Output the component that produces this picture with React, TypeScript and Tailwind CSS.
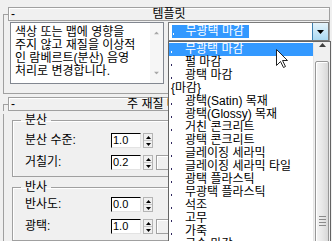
import React from "react";

/* ---- small drawn bits ---- */

function Tri({ up, className }: { up?: boolean; className?: string }) {
  return (
    <svg width="7" height="4" viewBox="0 0 7 4" className={className}>
      <polygon points={up ? "0,4 7,4 3.5,0" : "0,0 7,0 3.5,4"} fill="currentColor" />
    </svg>
  );
}

function SmallTri({ up }: { up?: boolean }) {
  return (
    <svg width="5" height="3" viewBox="0 0 5 3">
      <polygon points={up ? "0,3 5,3 2.5,0" : "0,0 5,0 2.5,3"} fill="#000" />
    </svg>
  );
}

function Cursor() {
  return (
    <svg width="13" height="20" viewBox="0 0 13 20" className="absolute left-[276px] top-[49px]">
      <path
        d="M0.5 0.5 L0.5 16.5 L4.5 12.5 L7.5 18.5 L9.5 17.5 L6.5 11.5 L11.5 11.5 Z"
        fill="#fff"
        stroke="#222"
        strokeWidth="1"
        strokeLinejoin="round"
      />
    </svg>
  );
}

/* ---- rollout pieces ---- */

function RolloutHeader({ title }: { title: string }) {
  return (
    <div className="flex h-[14px]">
      <div className="mt-[7px] w-[5px] border-l border-t border-[#a0a0a0]" />
      <div className="grid flex-1 grid-cols-[20px_1fr_20px] items-center border border-[#a0a0a0] bg-[#f0f0f0] leading-[12px] shadow-[inset_1px_1px_0_#fff]">
        <span className="pl-[2px]">-</span>
        <span className="text-center whitespace-nowrap">{title}</span>
        <span />
      </div>
    </div>
  );
}

function Spinner() {
  return (
    <div className="ml-[2px] flex h-[15px] w-[10px] flex-col border border-[#b4b4b4] bg-[#f0f0f0]">
      <div className="flex flex-1 items-center justify-center border-b border-[#c8c8c8]">
        <SmallTri up />
      </div>
      <div className="flex flex-1 items-center justify-center">
        <SmallTri />
      </div>
    </div>
  );
}

function SpinRow({ label, value, map }: { label: string; value: string; map?: boolean }) {
  return (
    <div className="flex h-[15px] items-center">
      <span className="w-[98px] pl-[12px] leading-[13px] whitespace-nowrap">{label}</span>
      <div className="flex h-[15px] w-[30px] items-center border border-b-[#e3e3e3] border-l-black border-r-[#e3e3e3] border-t-black bg-white pl-[1px] text-[11px] leading-[13px]">
        {value}
      </div>
      <Spinner />
      {map && <div className="ml-[3px] h-[15px] w-[20px] border border-[#a0a0a0] bg-[#f0f0f0] shadow-[inset_1px_1px_0_#fff]" />}
    </div>
  );
}

/* ---- dropdown list ---- */

const ITEMS: { text: string; dot: boolean }[] = [
  { text: "무광택 마감", dot: true },
  { text: "펄 마감", dot: true },
  { text: "광택 마감", dot: true },
  { text: "{마감}", dot: false },
  { text: "광택(Satin) 목재", dot: true },
  { text: "광택(Glossy) 목재", dot: true },
  { text: "거친 콘크리트", dot: true },
  { text: "광택 콘크리트", dot: true },
  { text: "글레이징 세라믹", dot: true },
  { text: "글레이징 세라믹 타일", dot: true },
  { text: "광택 플라스틱", dot: true },
  { text: "무광택 플라스틱", dot: true },
  { text: "석조", dot: true },
  { text: "고무", dot: true },
  { text: "가죽", dot: true },
  { text: "금속 마감", dot: true },
];

function DropList() {
  return (
    <div className="absolute left-[168px] top-[41px] flex h-[230px] w-[163px] border border-[#646464] bg-white">
      <div className="w-[144px] pt-[1px]">
        {ITEMS.map((it, i) => {
          const sel = i === 0;
          return (
            <div
              key={it.text}
              className={
                "flex h-[13px] items-center leading-[13px] whitespace-nowrap " +
                (sel ? "bg-[#3399ff] text-white" : "text-black")
              }
            >
              {it.dot ? (
                <span className="flex h-full w-[16px] items-end pb-[3px] pl-[2px]">
                  <span className={"h-[2px] w-[1px] " + (sel ? "bg-white" : "bg-[#302860]")} />
                </span>
              ) : (
                <span className="w-[2px]" />
              )}
              {it.text}
            </div>
          );
        })}
      </div>
      {/* scrollbar */}
      <div className="flex w-[17px] flex-col border-l border-[#e6e6e6] bg-[#f0f0f0]">
        <div className="flex h-[17px] items-center justify-center text-[#404040]">
          <Tri up />
        </div>
        <div className="mx-[1px] mt-[14px] flex h-[320px] flex-col items-center rounded-[2px] border border-[#979797] bg-gradient-to-r from-[#f4f4f4] via-[#e8e8e8] to-[#d8d8d8] pt-[154px] shadow-[inset_1px_1px_0_#fff]">
          <div className="flex w-[7px] flex-col gap-[2px]">
            <span className="h-[1px] bg-[#8a8a8a]" />
            <span className="h-[1px] bg-[#8a8a8a]" />
            <span className="h-[1px] bg-[#8a8a8a]" />
            <span className="h-[1px] bg-[#8a8a8a]" />
          </div>
        </div>
      </div>
    </div>
  );
}

export default function App() {
  return (
    <div className="relative h-[241px] w-[332px] overflow-hidden bg-[#f0f0f0] font-['Liberation_Sans','Noto_Sans_CJK_KR',sans-serif] text-[12px] text-black">
      <div className="ml-[3px] w-[327px] pt-[7px]">
        {/* 템플릿 rollout */}
        <RolloutHeader title="템플릿" />
        <div className="flex h-[73px] items-start border-b border-l border-r border-[#a0a0a0] pl-[6px]">
          <div className="mt-[1px] flex h-[62px] w-[154px] border border-[#828790] bg-white">
            <div className="flex-1 pl-[4px] pt-[3px] leading-[13px] whitespace-nowrap">
              <div>색상 또는 맵에 영향을</div>
              <div>주지 않고 재질을 이상적</div>
              <div>인 람베르트(분산) 음영</div>
              <div>처리로 변경합니다.</div>
            </div>
            <div className="flex w-[13px] flex-col items-center justify-between bg-[#f6f6f6] py-[8px] text-[#a8a8a8]">
              <Tri up className="scale-75" />
              <Tri className="scale-75" />
            </div>
          </div>
          <div className="ml-[4px] mt-[1px] flex h-[19px] w-[162px] border border-[#7a7a7a] bg-white">
            <div className="flex-1 pl-[3px] pt-[2px]">
              <div className="flex h-[13px] w-[77px] items-center bg-[#3399ff] leading-[13px] text-white whitespace-nowrap">
                <span className="flex h-full w-[14px] items-end pb-[3px] pl-[1px]">
                  <span className="h-[2px] w-[1px] bg-white" />
                </span>
                무광택 마감
              </div>
            </div>
            <div className="flex w-[16px] items-center justify-center border-l border-[#3c7fb1] bg-gradient-to-b from-[#e5f4fc] to-[#aad9f2] text-black">
              <Tri />
            </div>
          </div>
        </div>

        {/* 주 재질 rollout */}
        <div className="mt-[3px]">
          <RolloutHeader title="주 재질 매개변수" />
        </div>
        <div className="h-[140px] border-l border-[#a0a0a0] pl-[8px] pr-[4px]">
          <fieldset className="mt-[3px] border border-[#a0a0a0] pb-[6px] shadow-[inset_1px_1px_0_#fff]">
            <legend className="ml-[8px] px-[4px] leading-[13px]">분산</legend>
            <div className="mt-[6px] flex flex-col gap-[7px]">
              <SpinRow label="분산 수준:" value="1.0" />
              <SpinRow label="거칠기:" value="0.2" map />
            </div>
          </fieldset>
          <fieldset className="mt-[4px] border border-[#a0a0a0] pb-[6px] shadow-[inset_1px_1px_0_#fff]">
            <legend className="ml-[8px] px-[4px] leading-[13px]">반사</legend>
            <div className="mt-[3px] flex flex-col gap-[7px]">
              <SpinRow label="반사도:" value="0.0" />
              <SpinRow label="광택:" value="1.0" map />
            </div>
          </fieldset>
        </div>
      </div>

      <DropList />
      <Cursor />
    </div>
  );
}
